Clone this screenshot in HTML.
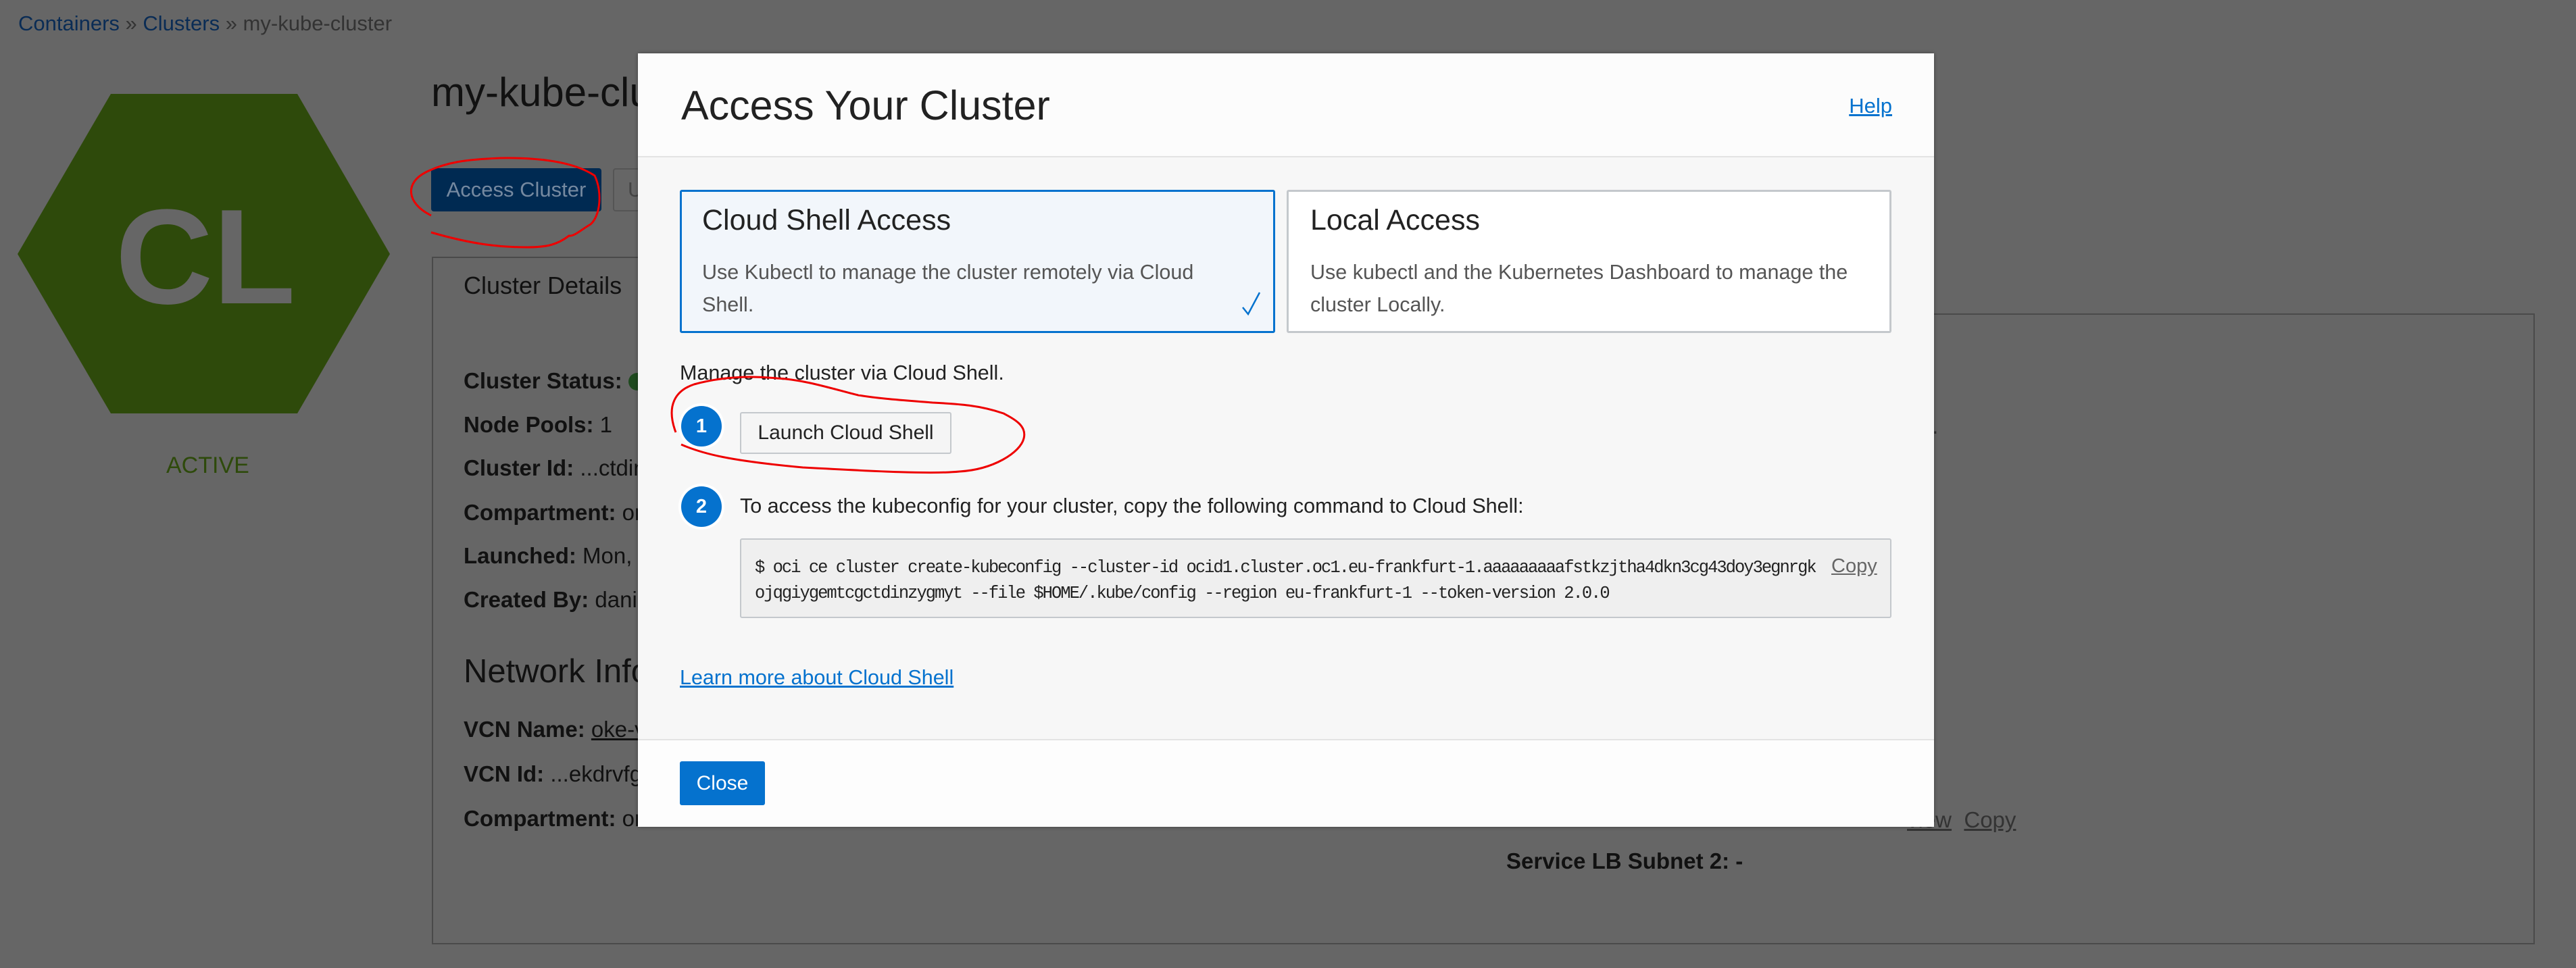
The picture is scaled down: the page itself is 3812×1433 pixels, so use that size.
<!DOCTYPE html>
<html><head><meta charset="utf-8"><style>
*{margin:0;padding:0;box-sizing:border-box}
body{width:3812px;height:1433px;background:#666;position:relative;overflow:hidden;font-family:"Liberation Sans",sans-serif}
.a{position:absolute;white-space:nowrap}
.lbl{font-size:33px;color:#111}
.lbl b{font-weight:bold}
</style></head><body>
<div class="a" style="left:27px;top:17px;font-size:31px;color:#333"><span style="color:#0a2c55">Containers</span> » <span style="color:#0a2c55">Clusters</span> » my-kube-cluster</div>
<svg class="a" style="left:0;top:0" width="640" height="760"><polygon points="26,376 164,139 440,139 577,376 440,612 164,612" fill="#2e4a0b"/>
<text x="304" y="449" text-anchor="middle" font-family="Liberation Sans" font-weight="bold" font-size="200" fill="#666">CL</text></svg>
<div class="a" style="left:246px;top:670px;font-size:34px;color:#2e4a0b">ACTIVE</div>
<div class="a" style="left:638px;top:102px;font-size:60px;color:#111">my-kube-cluster</div>
<div class="a" style="left:638px;top:249px;width:252px;height:64px;background:#002a52;border-radius:4px;color:#7589a0;font-size:31px;line-height:64px;text-align:center">Access Cluster</div>
<div class="a" style="left:907px;top:249px;width:120px;height:64px;border:2px solid #555;border-radius:4px;color:#444;font-size:31px;line-height:60px;padding-left:20px">U</div>
<div class="a" style="left:639px;top:380px;width:330px;height:86px;border:2px solid #4a4a4a;border-bottom:none"></div>
<div class="a" style="left:639px;top:464px;width:3112px;height:934px;border:2px solid #4a4a4a;border-top:none"></div>
<div class="a" style="left:969px;top:464px;width:2782px;height:2px;background:#4a4a4a"></div>
<div class="a" style="left:686px;top:402px;font-size:36px;color:#111">Cluster Details</div>
<div class="a lbl" style="left:686px;top:545px"><b>Cluster Status:</b> <span style="display:inline-block;width:26px;height:26px;border-radius:50%;background:#1f4a1f;vertical-align:-3px"></span></div>
<div class="a lbl" style="left:686px;top:610px"><b>Node Pools:</b> 1</div>
<div class="a lbl" style="left:686px;top:674px"><b>Cluster Id:</b> ...ctdinzygmyt</div>
<div class="a lbl" style="left:686px;top:740px"><b>Compartment:</b> oracle</div>
<div class="a lbl" style="left:686px;top:804px"><b>Launched:</b> Mon, Feb</div>
<div class="a lbl" style="left:686px;top:869px"><b>Created By:</b> daniel</div>
<div class="a" style="left:686px;top:966px;font-size:49px;color:#111">Network Information</div>
<div class="a lbl" style="left:686px;top:1061px"><b>VCN Name:</b> <u>oke-vcn</u></div>
<div class="a lbl" style="left:686px;top:1127px"><b>VCN Id:</b> ...ekdrvfgo</div>
<div class="a lbl" style="left:686px;top:1193px"><b>Compartment:</b> oracle</div>
<div class="a lbl" style="left:2845px;top:612px;color:#333"><u>y</u>.</div>
<div class="a lbl" style="left:2822px;top:1195px;color:#333"><u>view</u>&nbsp;&nbsp;<u>Copy</u></div>
<div class="a lbl" style="left:2229px;top:1256px"><b>Service LB Subnet 2: -</b></div>

<div class="a" style="left:944px;top:79px;width:1918px;height:1145px;background:#f7f7f7;box-shadow:0 0 6px rgba(0,0,0,.4);border-radius:3px">
 <div class="a" style="left:0;top:0;width:1918px;height:154px;background:#fcfcfc;border-bottom:2px solid #e3e3e3"></div>
 <div class="a" style="left:64px;top:42px;font-size:61px;color:#222">Access Your Cluster</div>
 <div class="a" style="right:62px;top:60px;font-size:31px;color:#0572ce;text-decoration:underline">Help</div>
 <div class="a" style="left:62px;top:202px;width:881px;height:212px;background:#f2f6fb;border:3px solid #0572ce;border-radius:3px"></div>
 <div class="a" style="left:95px;top:223px;font-size:43px;color:#222">Cloud Shell Access</div>
 <div class="a" style="left:95px;top:300px;font-size:30.5px;color:#555;line-height:48px;white-space:normal;width:780px">Use Kubectl to manage the cluster remotely via Cloud Shell.</div>
 <svg class="a" style="left:892px;top:350px" width="30" height="40"><path d="M3 26 L11 36 L28 4" stroke="#0572ce" stroke-width="2.5" fill="none"/></svg>
 <div class="a" style="left:960px;top:202px;width:895px;height:212px;background:#fff;border:3px solid #c4c8cc;border-radius:3px"></div>
 <div class="a" style="left:995px;top:223px;font-size:43px;color:#222">Local Access</div>
 <div class="a" style="left:995px;top:300px;font-size:30.5px;color:#555;line-height:48px;white-space:normal;width:840px">Use kubectl and the Kubernetes Dashboard to manage the cluster Locally.</div>
 <div class="a" style="left:62px;top:456px;font-size:30.5px;color:#222">Manage the cluster via Cloud Shell.</div>
 <div class="a" style="left:60px;top:518px;width:68px;height:68px;border-radius:50%;background:#fff"></div>
 <div class="a" style="left:64px;top:522px;width:60px;height:60px;border-radius:50%;background:#0572ce;color:#fff;font-size:29px;font-weight:bold;line-height:60px;text-align:center">1</div>
 <div class="a" style="left:151px;top:531px;width:313px;height:62px;background:#f5f5f5;border:2px solid #c4c8cc;border-radius:3px;font-size:30px;color:#222;line-height:58px;text-align:center">Launch Cloud Shell</div>
 <div class="a" style="left:60px;top:637px;width:68px;height:68px;border-radius:50%;background:#fff"></div>
 <div class="a" style="left:64px;top:641px;width:60px;height:60px;border-radius:50%;background:#0572ce;color:#fff;font-size:29px;font-weight:bold;line-height:60px;text-align:center">2</div>
 <div class="a" style="left:151px;top:653px;font-size:30.5px;color:#222">To access the kubeconfig for your cluster, copy the following command to Cloud Shell:</div>
 <div class="a" style="left:151px;top:718px;width:1704px;height:118px;background:#efefef;border:2px solid #c4c8cc;border-radius:3px"></div>
 <div class="a" style="left:173px;top:743px;font-family:'Liberation Mono',monospace;font-size:25.5px;letter-spacing:-2.0px;color:#222;line-height:38px">$ oci ce cluster create-kubeconfig --cluster-id ocid1.cluster.oc1.eu-frankfurt-1.aaaaaaaaafstkzjtha4dkn3cg43doy3egnrgk<br>ojqgiygemtcgctdinzygmyt --file $HOME/.kube/config --region eu-frankfurt-1 --token-version 2.0.0</div>
 <div class="a" style="left:1766px;top:743px;font-size:29px;color:#666;text-decoration:underline">Copy</div>
 <div class="a" style="left:62px;top:907px;font-size:30.5px;color:#0572ce;text-decoration:underline">Learn more about Cloud Shell</div>
 <div class="a" style="left:0;top:1015px;width:1918px;height:130px;background:#fdfdfd;border-top:2px solid #e3e3e3"></div>
 <div class="a" style="left:62px;top:1048px;width:126px;height:65px;background:#0572ce;border-radius:3px;color:#fff;font-size:30px;line-height:65px;text-align:center">Close</div>
</div>

<svg class="a" style="left:0;top:0" width="3812" height="1433" fill="none" stroke="#e00" stroke-width="3">
<path d="M638 319 C600 300 600 270 630 255 C660 240 690 236 740 234 C800 233 850 240 880 260 C892 285 888 320 874 332 C860 340 850 350 842 349 C825 362 810 366 780 366 C740 366 700 362 638 344"/>
<path d="M1008 658 C1040 672 1080 682 1188 692 C1300 698 1380 702 1420 698 C1470 695 1510 670 1515 649 C1520 630 1500 620 1485 612 C1450 600 1420 598 1380 596 C1330 592 1300 590 1270 585 C1230 575 1190 562 1150 560 C1100 555 1060 560 1027 569 C1000 578 985 600 1000 640"/>
</svg>
</body></html>
